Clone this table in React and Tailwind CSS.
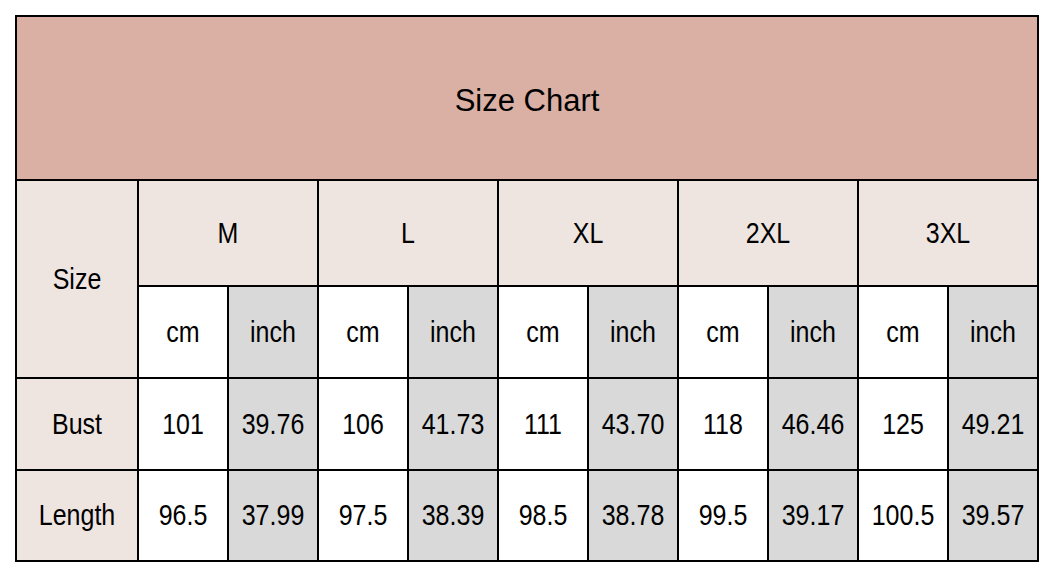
import React from 'react';

const sizes = ['M', 'L', 'XL', '2XL', '3XL'];
const rows = [
    { label: 'Bust', values: ['101', '39.76', '106', '41.73', '111', '43.70', '118', '46.46', '125', '49.21'] },
    { label: 'Length', values: ['96.5', '37.99', '97.5', '38.39', '98.5', '38.78', '99.5', '39.17', '100.5', '39.57'] },
];

const Txt = ({ children }) => (
    <span className="inline-block scale-y-[1.15] text-[25px] leading-none text-black">{children}</span>
);

const App = () => {
    return (
        <div className="w-[1054px] h-[578px] bg-white pt-[15px] pl-[15px]" style={{ fontFamily: '"Liberation Sans", Arial, sans-serif' }}>
            <div className="grid w-[1024px] grid-cols-[120px_repeat(10,88px)] grid-rows-[162px_104px_90px_90px_89px] gap-[2px] bg-black p-[2px]">
                <div className="col-span-11 flex items-center justify-center bg-[#dab0a5] pt-[4px]">
                    <span className="text-[31px] leading-none text-black">Size Chart</span>
                </div>

                <div className="row-span-2 flex items-center justify-center bg-[#eee5e0]">
                    <Txt>Size</Txt>
                </div>
                {sizes.map((s) => (
                    <div key={s} className="col-span-2 flex items-center justify-center bg-[#eee5e0]">
                        <Txt>{s}</Txt>
                    </div>
                ))}
                {sizes.map((s) => (
                    <React.Fragment key={s}>
                        <div className="flex items-center justify-center bg-white">
                            <Txt>cm</Txt>
                        </div>
                        <div className="flex items-center justify-center bg-[#d9d9d9]">
                            <Txt>inch</Txt>
                        </div>
                    </React.Fragment>
                ))}

                {rows.map((r) => (
                    <React.Fragment key={r.label}>
                        <div className="flex items-center justify-center bg-[#eee5e0]">
                            <Txt>{r.label}</Txt>
                        </div>
                        {r.values.map((v, i) => (
                            <div key={i} className={`flex items-center justify-center ${i % 2 ? 'bg-[#d9d9d9]' : 'bg-white'}`}>
                                <Txt>{v}</Txt>
                            </div>
                        ))}
                    </React.Fragment>
                ))}
            </div>
        </div>
    );
};

export default App;
